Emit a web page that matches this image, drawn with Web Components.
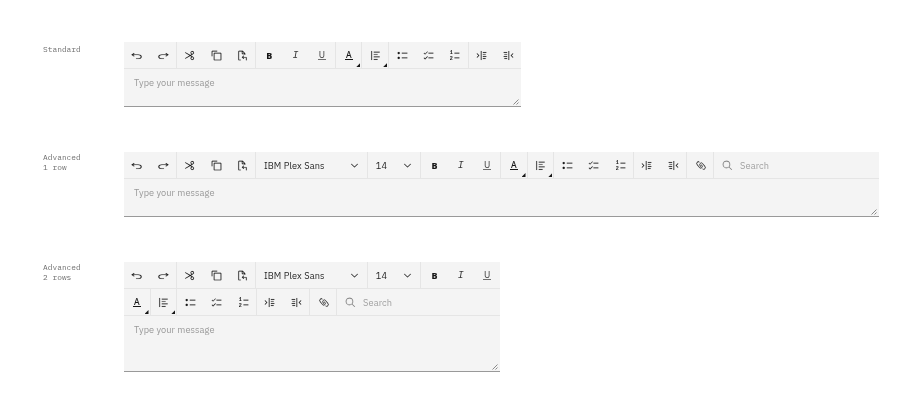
<!DOCTYPE html>
<html lang="en">
<head>
<meta charset="utf-8">
<title>Text editor toolbars</title>
<style>
html{background:#fff}
body{margin:0;width:922px;height:416px;overflow:hidden;background:#fff;font-family:"IBM Plex Sans","Noto Sans",sans-serif;color:#262626}
</style>
</head>
<body>
<editor-gallery></editor-gallery>
<script>
const ICONS = {
  undo:'<path d="M20 10H7.8l3.6-3.6L10 5 4 11l6 6 1.4-1.4L7.8 12H20a6 6 0 0 1 0 12h-5v2h5a8 8 0 0 0 0-16Z" transform="translate(-4 5) scale(1.25 .8)"/>',
  redo:'<path d="M20 10H7.8l3.6-3.6L10 5 4 11l6 6 1.4-1.4L7.8 12H20a6 6 0 0 1 0 12h-5v2h5a8 8 0 0 0 0-16Z" transform="translate(36 5) scale(-1.25 .8)"/>',
  cut:'<path d="M26.5,19.63,20.24,16l6.26-3.63a5,5,0,0,0-1.21-9.2A5.19,5.19,0,0,0,24,3a5,5,0,0,0-4.33,7.53,5,5,0,0,0,2.39,2.1l-3.82,2.21L4,6.6,3,8.34,16.24,16,3,23.68l1,1.74,14.24-8.26,3.82,2.21a5,5,0,0,0-2.39,2.1A5,5,0,0,0,24,29a5.19,5.19,0,0,0,1.29-.17,5,5,0,0,0,1.21-9.2ZM21.4,9.53a3,3,0,0,1,1.1-4.12,3,3,0,0,1,4.1,1.11,3,3,0,0,1-1.1,4.11h0A3,3,0,0,1,21.4,9.53Zm5.2,16a3,3,0,0,1-4.1,1.11,3,3,0,0,1-1.1-4.12,3,3,0,0,1,4.1-1.1h0A3,3,0,0,1,26.6,25.48Z"/>',
  copy:'<path d="M28,10V28H10V10H28m0-2H10a2,2,0,0,0-2,2V28a2,2,0,0,0,2,2H28a2,2,0,0,0,2-2V10a2,2,0,0,0-2-2ZM4,18H2V4A2,2,0,0,1,4,2H18V4H4Z"/>',
  paste:'<path d="M26,20H17.83l2.58-2.59L19,16l-5,5,5,5,1.41-1.41L17.83,22H26v8h2V22A2,2,0,0,0,26,20ZM23.71,9.29l-7-7A1,1,0,0,0,16,2H6A2,2,0,0,0,4,4V28a2,2,0,0,0,2,2h5V28H6V4h8v6a2,2,0,0,0,2,2h6v2h2V10A1,1,0,0,0,23.71,9.29ZM16,4.41,21.59,10H16Z"/>',
  align:'<path d="M4 3h2v26H4zM11 5h17v2H11zM11 12h11v2H11zM11 19h17v2H11zM11 26h11v2H11z"/>',
  bullets:'<circle cx="5" cy="9" r="3.3"/><circle cx="5" cy="23" r="3.3"/><path d="M14 8h16v2H14zM14 22h16v2H14z"/>',
  checks:'<path d="M16 8h14v2H16zM16 22h14v2H16zM6 10.6 3.4 8 2 9.4l4 4 8-8L12.6 4zM6 24.6 3.4 22 2 23.4l4 4 8-8-1.4-1.4z"/>',
  numbers:'<path d="M16 8h14v2H16zM16 22h14v2H16z"/><text x="2" y="12.5" font-family="Liberation Mono,monospace" font-weight="700" font-size="15">1</text><text x="2" y="29" font-family="Liberation Mono,monospace" font-weight="700" font-size="15">2</text>',
  indent:'<path d="M20 6h10v2H20zM20 12h8v2h-8zM20 18h10v2H20zM20 24h8v2h-8zM14 3h2v26h-2zM3.4 22.4 2 21l5-5-5-5 1.4-1.4L9.8 16z"/>',
  outdent:'<path d="M2 6h10v2H2zM4 12h8v2H4zM2 18h10v2H2zM4 24h8v2H4zM16 3h2v26h-2zM28.6 22.4 30 21l-5-5 5-5-1.4-1.4L22.2 16z"/>',
  link:'<path transform="translate(32.5) scale(-1 1)" d="M29.25,6.76a6,6,0,0,0-8.5,0l1.42,1.42a4,4,0,1,1,5.67,5.67l-8,8a4,4,0,1,1-5.67-5.66l1.41-1.42-1.41-1.42-1.42,1.42a6,6,0,0,0,0,8.5A6,6,0,0,0,17,25a6,6,0,0,0,4.27-1.76l8-8A6,6,0,0,0,29.25,6.76ZM4.19,24.82a4,4,0,0,1,0-5.67l8-8a4,4,0,0,1,5.67,0A3.94,3.94,0,0,1,19,14a4,4,0,0,1-1.17,2.85L15.71,19l1.42,1.42,2.12-2.12a6,6,0,0,0-8.51-8.51l-8,8a6,6,0,0,0,0,8.51A6,6,0,0,0,7,28a6.07,6.07,0,0,0,4.28-1.76L9.86,24.82A4,4,0,0,1,4.19,24.82Z"/>',
  search:'<path d="M29 27.6 21.4 20A11 11 0 1 0 20 21.4L27.6 29zM4 13a9 9 0 1 1 9 9 9 9 0 0 1-9-9z"/>',
  chevron:'<path d="M16 22 6 12l1.4-1.4 8.6 8.6 8.6-8.6L26 12z"/>'
};
ICONS.link = '<g transform="translate(17.5 16) scale(.88 1.02) translate(-16.5 -16.5)">' + ICONS.link + '</g>';
const LETTERS = { bold:'B', italic:'I', underline:'U', color:'A' };

class UiIcon extends HTMLElement {
  connectedCallback(){
    this.attachShadow({mode:'open'}).innerHTML = `<style>
      :host{display:block;flex:none;width:11px;height:11px}
      svg{display:block;width:100%;height:100%;fill:currentColor;stroke:currentColor;stroke-width:.3;overflow:visible}
      text{stroke:none}
    </style><svg viewBox="0 0 32 32" aria-hidden="true">${ICONS[this.getAttribute('name')]}</svg>`;
  }
}
customElements.define('ui-icon', UiIcon);

class ToolButton extends HTMLElement {
  connectedCallback(){
    const n = this.getAttribute('name'), l = LETTERS[n];
    this.attachShadow({mode:'open'}).innerHTML = `<style>
      :host{display:flex;position:relative;flex:none;width:26.25px;height:26px;align-items:center;justify-content:center;color:#161616}
      b{display:block;box-sizing:border-box;width:8px;height:9px;font:400 9px/8px "Noto Sans",sans-serif;text-align:center}
      .bold{font-weight:800;font-size:9px;line-height:9px}
      .italic{font:italic 400 10px/10px "Liberation Mono",monospace;color:#393939}
      .underline{border-bottom:1px solid #6f6f6f;font-size:8.6px;line-height:9px;color:#393939}
      .color{border-bottom:1px solid #161616;font-size:8.6px;line-height:9px;font-weight:500}
      i{position:absolute;right:1.5px;bottom:1px;width:4px;height:4px;background:#161616;clip-path:polygon(100% 0,100% 100%,0 100%)}
    </style>${l ? `<b class="${n}">${l}</b>` : `<ui-icon name="${n}"></ui-icon>`}${this.hasAttribute('menu') ? '<i></i>' : ''}`;
  }
}
customElements.define('tool-button', ToolButton);

class ToolGroup extends HTMLElement {
  connectedCallback(){
    this.attachShadow({mode:'open'}).innerHTML = `<style>
      :host{display:flex;flex:none;box-sizing:border-box;height:26px;width:calc(var(--n)*26.25px + .62px);border-right:1px solid #e5e5e5}
      :host([last]){border-right:0}
    </style><slot></slot>`;
    this.style.setProperty('--n', this.children.length);
  }
}
customElements.define('tool-group', ToolGroup);

class ToolSelect extends HTMLElement {
  connectedCallback(){
    this.attachShadow({mode:'open'}).innerHTML = `<style>
      :host{display:flex;flex:none;box-sizing:border-box;align-items:center;justify-content:space-between;height:26px;width:var(--w);padding:0 7.2px 0 7.7px;border-right:1px solid #e5e5e5;font-size:9.2px;letter-spacing:.13px;color:#262626;white-space:nowrap}
      span{padding-top:2px}
    </style><span><slot></slot></span><ui-icon name="chevron"></ui-icon>`;
  }
}
customElements.define('tool-select', ToolSelect);

class ToolSearch extends HTMLElement {
  connectedCallback(){
    this.attachShadow({mode:'open'}).innerHTML = `<style>
      :host{display:flex;flex:1;align-items:center;gap:7.5px;height:26px;padding-left:7.8px;color:#a0a0a0;font-size:9.2px;letter-spacing:.1px}
      span{padding-top:1px}
      ui-icon{color:#6f6f6f}
    </style><ui-icon name="search"></ui-icon><span><slot></slot></span>`;
  }
}
customElements.define('tool-search', ToolSearch);

class ToolRow extends HTMLElement {
  connectedCallback(){
    this.attachShadow({mode:'open'}).innerHTML = `<style>
      :host{display:flex;flex:none;height:26px;border-bottom:1px solid #e5e5e5}
    </style><slot></slot>`;
  }
}
customElements.define('tool-row', ToolRow);

class TextEditor extends HTMLElement {
  connectedCallback(){
    this.attachShadow({mode:'open'}).innerHTML = `<style>
      :host{display:flex;flex-direction:column;box-sizing:border-box;position:relative;background:#f4f4f4;border-bottom:1px solid #999}
      p{margin:0;padding:8px 10.3px;font-size:9.2px;line-height:13px;letter-spacing:.08px;color:#999}
      svg{position:absolute;right:2px;bottom:1px;width:6px;height:6px;stroke:#6f6f6f;stroke-width:.8}
    </style><slot></slot><p>Type your message</p><svg viewBox="0 0 6 6"><path d="M.5 5.5l5-5M3.5 5.5l2-2"/></svg>`;
  }
}
customElements.define('text-editor', TextEditor);

class EditorExample extends HTMLElement {
  connectedCallback(){
    this.attachShadow({mode:'open'}).innerHTML = `<style>
      :host{display:flex}
      div{width:80.75px;padding-top:var(--pt,0);font:7.88px/10px "IBM Plex Mono","Liberation Mono",monospace;color:#6f6f6f;white-space:pre-line}
    </style><div>${this.getAttribute('label').replace('|','\n')}</div><slot></slot>`;
  }
}
customElements.define('editor-example', EditorExample);

const btn = (names) => names.split(' ').map(n => `<tool-button name="${n}"></tool-button>`).join('');
const grp = (names, extra='') => `<tool-group ${extra}>${btn(names)}</tool-group>`;
const history = grp('undo redo') + grp('cut copy paste');
const fonts = '<tool-select style="--w:111.9px">IBM Plex Sans</tool-select><tool-select style="--w:53.3px">14</tool-select>';
const menus = '<tool-group><tool-button name="color" menu></tool-button></tool-group><tool-group><tool-button name="align" menu></tool-button></tool-group>';
const lists = grp('bullets checks numbers');
const search = '<tool-search>Search</tool-search>';

class EditorGallery extends HTMLElement {
  connectedCallback(){
    this.attachShadow({mode:'open'}).innerHTML = `<style>
      :host{display:flex;flex-direction:column;gap:45px;padding:42px 0 0 43px;will-change:transform}
      .std{width:397.3px;height:65px}.one{width:755.3px;height:65px}.two{width:376.3px;height:110px}
    </style>
    <editor-example label="Standard" style="--pt:2px"><text-editor class="std"><tool-row>${history}${grp('bold italic underline')}${menus}${lists}${grp('indent outdent','last')}</tool-row></text-editor></editor-example>
    <editor-example label="Advanced|1 row"><text-editor class="one"><tool-row>${history}${fonts}${grp('bold italic underline')}${menus}${lists}${grp('indent outdent')}${grp('link')}${search}</tool-row></text-editor></editor-example>
    <editor-example label="Advanced|2 rows"><text-editor class="two"><tool-row>${history}${fonts}${grp('bold italic underline','last')}</tool-row><tool-row>${menus}${lists}${grp('indent outdent')}${grp('link')}${search}</tool-row></text-editor></editor-example>`;
  }
}
customElements.define('editor-gallery', EditorGallery);
</script>
</body>
</html>
